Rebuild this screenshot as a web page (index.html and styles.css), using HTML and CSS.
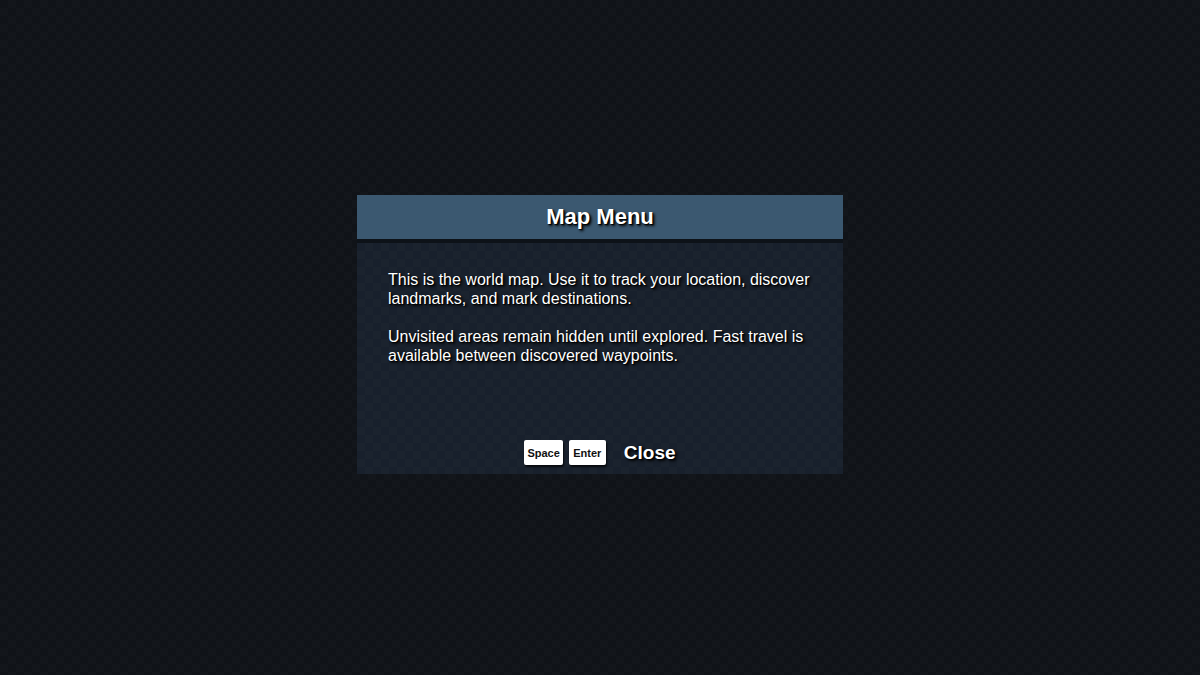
FILE: index.html
```html
<!DOCTYPE html>
<html lang="en">
<head>
    <meta charset="UTF-8">
    <meta name="viewport" content="width=device-width, initial-scale=1.0">
    <title>Map Menu</title>
    <link rel="stylesheet" href="styles.css">
</head>
<body>

    <div class="menu-screen">
        <div class="menu-panel">
            <div class="menu-header">
                <h1 class="menu-title">Map Menu</h1>
            </div>
            <div class="menu-body">
                <div class="menu-text">
                    <p>This is the world map. Use it to track your location, discover landmarks, and mark destinations.</p>
                    <p>Unvisited areas remain hidden until explored. Fast travel is available between discovered waypoints.</p>
                </div>
                <div class="menu-footer">
                    <span class="key">Space</span>
                    <span class="key">Enter</span>
                    <span class="action">Close</span>
                </div>
            </div>
        </div>
    </div>

</body>
</html>
```

FILE: styles.css
```css
/* pantalla de menu */

html, body {
  margin: 0;
  height: 100%;
}
body {
  background-color: #101318;
  background-image: repeating-conic-gradient(rgba(255, 255, 255, 0.012) 0 25%, transparent 0 50%);
  background-size: 16px 16px;
  font-family: "Liberation Sans", Arial, sans-serif;
  color: white;
}
.menu-screen {
  height: 100%;
  display: flex;
  align-items: center;
  justify-content: center;
}
.menu-panel {
  width: 486px;
  display: flex;
  flex-direction: column;
  margin-top: -6px;
}
.menu-header {
  height: 44px;
  background-color: #3b5870;
  display: flex;
  align-items: center;
  justify-content: center;
  border-bottom: 4px solid #0d1218;
}
.menu-title {
  margin: 0;
  font-size: 22px;
  font-weight: bold;
  text-shadow: 1px 1px 1px #000, 2px 2px 3px #000;
}
.menu-body {
  height: 231px;
  background-color: #18202c;
  background-image: repeating-conic-gradient(rgba(255, 255, 255, 0.012) 0 25%, transparent 0 50%);
  background-size: 16px 16px;
  display: flex;
  flex-direction: column;
  box-sizing: border-box;
  padding: 27px 31px 9px 31px;
}
.menu-text {
  flex: 1;
}
.menu-text p {
  margin: 0 0 19px 0;
  font-size: 16px;
  line-height: 19px;
  text-shadow: 1px 1px 1px #000, 2px 2px 3px #000;
}
.menu-footer {
  display: flex;
  align-items: center;
  justify-content: center;
  gap: 6px;
}
.key {
  height: 25px;
  min-width: 37px;
  box-sizing: border-box;
  padding: 0 3px;
  background-color: white;
  color: #111;
  border-radius: 2px;
  font-size: 11px;
  font-weight: bold;
  display: flex;
  align-items: center;
  justify-content: center;
  box-shadow: 1px 2px 2px rgba(0, 0, 0, 0.7);
}
.action {
  margin-left: 12px;
  font-size: 19px;
  font-weight: bold;
  text-shadow: 1px 1px 1px #000, 2px 2px 3px #000;
}
```
